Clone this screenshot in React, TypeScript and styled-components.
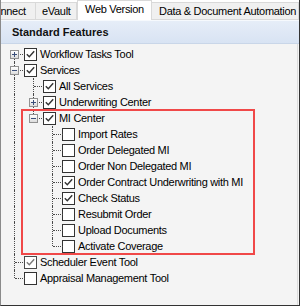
import React from "react";
import styled, { createGlobalStyle } from "styled-components";

const Global = createGlobalStyle`
  html, body { margin: 0; padding: 0; background: #ffffff; }
  body { font-family: "Liberation Sans", Arial, sans-serif; }
`;

const Frame = styled.div`
  position: relative;
  width: 300px;
  height: 306px;
  box-sizing: border-box;
  border-left: 1px solid #8a8a8a;
  border-right: 1px solid #333333;
  border-bottom: 1px solid #333333;
  background: #f4f4f4;
  overflow: hidden;
  display: flex;
  flex-direction: column;
`;

const TabStrip = styled.div`
  height: 20px;
  flex: none;
  display: flex;
  align-items: flex-end;
  margin-left: -20px;
  background: #ffffff;
  border-bottom: 1px solid #d9d9d9;
  box-sizing: border-box;
`;

const Tab = styled.div<{ $active?: boolean; $w: number; $pad: number }>`
  flex: none;
  width: ${(p) => p.$w}px;
  box-sizing: border-box;
  height: ${(p) => (p.$active ? 20 : 17)}px;
  margin-bottom: ${(p) => (p.$active ? -1 : 0)}px;
  padding-left: ${(p) => p.$pad}px;
  border: 1px solid #d9d9d9;
  border-bottom: none;
  border-left: ${(p) => (p.$active ? "1px solid #d9d9d9" : "none")};
  background: ${(p) => (p.$active ? "#ffffff" : "#f0f0f0")};
  font-size: 11px;
  letter-spacing: -0.3px;
  color: #000;
  line-height: 16px;
  white-space: nowrap;
  overflow: hidden;
`;

const Header = styled.div`
  flex: none;
  height: 24px;
  box-sizing: border-box;
  border-top: 1px solid #f6f9fd;
  border-bottom: 1px solid #c9d6e8;
  background: linear-gradient(#e6edf8, #d8e3f3);
  padding-left: 11px;
  font-size: 11px;
  font-weight: bold;
  line-height: 22px;
  color: #111;
`;

const Body = styled.div`
  flex: 1;
  border-right: 1px solid #dcdcdc;
  margin-right: 1px;
  padding-top: 2px;
  padding-left: 5px;
  display: flex;
  flex-direction: column;
`;

const Row = styled.div`
  height: 16px;
  display: flex;
  align-items: stretch;
`;

const Guide = styled.div<{ $line: boolean }>`
  position: relative;
  width: 19px;
  flex: none;
  &::before {
    content: "";
    display: ${(p) => (p.$line ? "block" : "none")};
    position: absolute;
    left: 8px;
    top: 0;
    bottom: 0;
    border-left: 1px dotted #4a4a4a;
  }
`;

const Connector = styled.div<{ $first: boolean; $last: boolean }>`
  position: relative;
  width: 19px;
  flex: none;
  &::before {
    content: "";
    position: absolute;
    left: 8px;
    top: ${(p) => (p.$first ? 8 : 0)}px;
    bottom: ${(p) => (p.$last ? 8 : 0)}px;
    border-left: 1px dotted #4a4a4a;
  }
  &::after {
    content: "";
    position: absolute;
    left: 9px;
    top: 8px;
    width: 10px;
    border-top: 1px dotted #4a4a4a;
  }
`;

const Expander = styled.div`
  position: absolute;
  z-index: 1;
  left: 4px;
  top: 4px;
  width: 9px;
  height: 9px;
  box-sizing: border-box;
  border: 1px solid #919191;
  background: linear-gradient(#ffffff, #dcdcdc);
  display: flex;
  align-items: center;
  justify-content: center;
`;

const Check = styled.div<{ $dim?: boolean }>`
  flex: none;
  align-self: center;
  margin-left: -1px;
  width: 13px;
  height: 13px;
  box-sizing: border-box;
  border: 1px solid ${(p) => (p.$dim ? "#4a4a4a" : "#333333")};
  background: #ffffff;
  display: flex;
`;

const Label = styled.span`
  margin-left: 3px;
  font-size: 11px;
  letter-spacing: -0.3px;
  line-height: 16px;
  color: #000;
  white-space: nowrap;
`;

const Highlight = styled.div`
  position: absolute;
  left: 20px;
  top: 109px;
  width: 234px;
  height: 146px;
  box-sizing: border-box;
  border: 2px solid #f04848;
  pointer-events: none;
`;

type Node = {
  label: string;
  checked: boolean;
  dim?: boolean;
  expanded?: boolean;
  children?: Node[];
};

const tree: Node[] = [
  { label: "Workflow Tasks Tool", checked: true, expanded: false, children: [] },
  {
    label: "Services",
    checked: true,
    expanded: true,
    children: [
      { label: "All Services", checked: true },
      { label: "Underwriting Center", checked: true, expanded: false, children: [] },
      {
        label: "MI Center",
        checked: true,
        expanded: true,
        children: [
          { label: "Import Rates", checked: false },
          { label: "Order Delegated MI", checked: false },
          { label: "Order Non Delegated MI", checked: false },
          { label: "Order Contract Underwriting with MI", checked: true },
          { label: "Check Status", checked: true },
          { label: "Resubmit Order", checked: false },
          { label: "Upload Documents", checked: false },
          { label: "Activate Coverage", checked: false },
        ],
      },
    ],
  },
  { label: "Scheduler Event Tool", checked: true, dim: true },
  { label: "Appraisal Management Tool", checked: false },
];

const CheckMark = ({ dim }: { dim?: boolean }) => (
  <svg width="11" height="11" viewBox="0 0 11 11">
    <path
      d="M1.8 5.2 L4.3 7.8 L9.2 2.2"
      fill="none"
      stroke={dim ? "#7a7a7a" : "#333333"}
      strokeWidth="1.4"
    />
  </svg>
);

const ExpandSign = ({ open }: { open: boolean }) => (
  <svg width="7" height="7" viewBox="0 0 7 7">
    <path d="M1 3.5 H6" stroke="#3a4f7a" strokeWidth="1" shapeRendering="crispEdges" />
    {!open && <path d="M3.5 1 V6" stroke="#3a4f7a" strokeWidth="1" shapeRendering="crispEdges" />}
  </svg>
);

type Flat = { node: Node; depth: number; first: boolean; last: boolean; ancestorsLast: boolean[] };

function flatten(nodes: Node[], depth: number, ancestorsLast: boolean[], out: Flat[]) {
  nodes.forEach((n, i) => {
    const last = i === nodes.length - 1;
    out.push({ node: n, depth, first: depth === 0 && i === 0, last, ancestorsLast });
    if (n.children && n.expanded) flatten(n.children, depth + 1, [...ancestorsLast, last], out);
  });
  return out;
}

export default function App() {
  const rows = flatten(tree, 0, [], []);
  return (
    <>
      <Global />
      <Frame>
        <TabStrip>
          <Tab $w={55} $pad={6}>Connect</Tab>
          <Tab $w={41} $pad={6}>eVault</Tab>
          <Tab $w={75} $pad={7} $active>Web Version</Tab>
          <Tab $w={147} $pad={7}>Data &amp; Document Automation</Tab>
        </TabStrip>
        <Header>Standard Features</Header>
        <Body>
          {rows.map((r, idx) => (
            <Row key={idx}>
              {r.ancestorsLast.map((al, i) => (
                <Guide key={i} $line={!al} />
              ))}
              <Connector $first={r.first} $last={r.last}>
                {r.node.children && (
                  <Expander>
                    <ExpandSign open={!!r.node.expanded} />
                  </Expander>
                )}
              </Connector>
              <Check $dim={r.node.dim}>{r.node.checked && <CheckMark dim={r.node.dim} />}</Check>
              <Label>{r.node.label}</Label>
            </Row>
          ))}
        </Body>
        <Highlight />
      </Frame>
    </>
  );
}
